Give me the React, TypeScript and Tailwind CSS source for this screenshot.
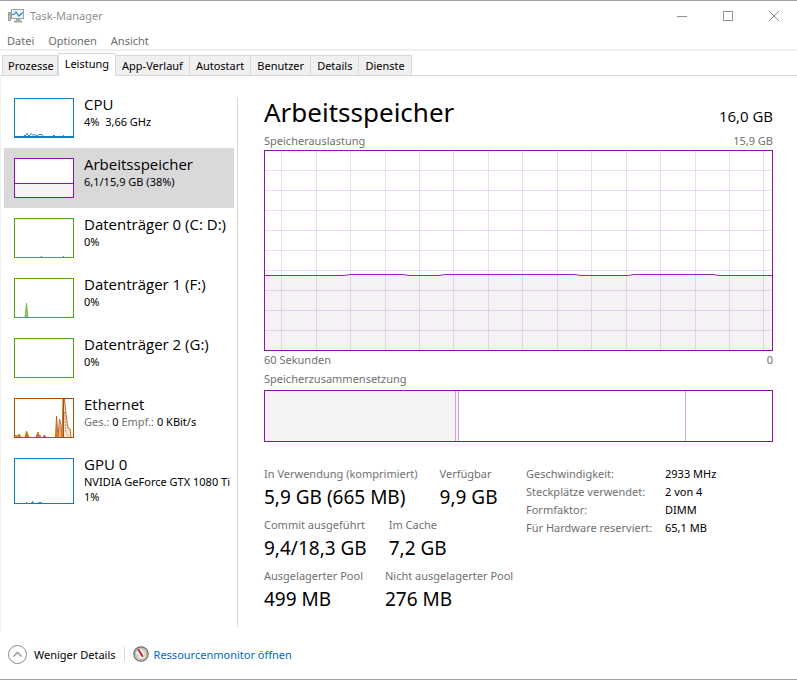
import React, { useState } from 'react';

interface Resource {
  id: string;
  title: string;
  lines: React.ReactNode[];
  chart: React.ReactNode;
}

const CpuChart = () => (
  <svg width="60" height="40" viewBox="0 0 60 40" className="shrink-0" aria-hidden="true">
    <rect x="0.5" y="0.5" width="59" height="39" fill="#fff" stroke="#117dbb" />
    <path d="M1 38.5H59" stroke="#117dbb" />
    <path
      d="M10 37.5H12L13 35.5L15 38L17.5 35.5L19 37.5L21 36.5L23 38L25 36.5H28L29 38M39 37.5H41M49 37.5H50"
      fill="none"
      stroke="#117dbb"
      strokeOpacity="0.9"
    />
  </svg>
);

const MemoryChart = () => (
  <svg width="60" height="40" viewBox="0 0 60 40" className="shrink-0" aria-hidden="true">
    <rect x="0.5" y="0.5" width="59" height="39" fill="#fff" stroke="#8b12ae" />
    <rect x="1" y="26" width="58" height="13" fill="#f4f2f4" />
    <path d="M1 25.5H59" stroke="#8b12ae" />
  </svg>
);

const DiskChart = ({ path }: { path?: string }) => (
  <svg width="60" height="40" viewBox="0 0 60 40" className="shrink-0" aria-hidden="true">
    <rect x="0.5" y="0.5" width="59" height="39" fill="#fff" stroke="#4da60c" />
    {path && <path d={path} fill="#4da60c" fillOpacity="0.6" stroke="#4da60c" strokeWidth="0.6" />}
  </svg>
);

const EthernetChart = () => (
  <svg width="60" height="40" viewBox="0 0 60 40" className="shrink-0" aria-hidden="true">
    <path
      d="M41 39L42.5 18L44 39L45.5 22L47 28L48 39L49 1H51L52 12L53 24L54 30L56 31L57 39Z"
      fill="#f8e6da"
    />
    <path
      d="M41.5 39L42.5 18L44 39L45.5 21L47 27L48 39L49 1H50.5L51.5 12L53 24L54 30L56 31L57 39"
      fill="none"
      stroke="#b45a14"
      strokeWidth="0.9"
    />
    <path
      d="M1 38L2 37L3 39L5 36L7 39ZM11 39L12.5 33L14 37L15 39ZM22 39L24 34L25 37L27 38ZM29 39L30.5 37L32 39ZM42.5 24V39M46 28V39"
      fill="#c8702c"
      stroke="#c8702c"
      strokeWidth="0.9"
    />
    <path d="M49.5 1V39" stroke="#a74f01" />
    <path d="M50.5 14L52 35L55 38" fill="none" stroke="#c8702c" strokeWidth="0.8" strokeDasharray="2 1" />
    <rect x="0.5" y="0.5" width="59" height="39" fill="none" stroke="#a74f01" />
  </svg>
);

const GpuChart = () => (
  <svg width="60" height="46" viewBox="0 0 60 46" className="shrink-0" aria-hidden="true">
    <rect x="0.5" y="0.5" width="59" height="45" fill="#fff" stroke="#117dbb" />
    <path d="M12 44.5H13M17 44.5H20M18 43.5H19M24 44.5H28" stroke="#117dbb" strokeOpacity="0.75" />
  </svg>
);

const resources: Resource[] = [
  { id: 'cpu', title: 'CPU', lines: [<>4%&nbsp; 3,66 GHz</>], chart: <CpuChart /> },
  { id: 'memory', title: 'Arbeitsspeicher', lines: ['6,1/15,9 GB (38%)'], chart: <MemoryChart /> },
  {
    id: 'disk0',
    title: 'Datenträger 0 (C: D:)',
    lines: ['0%'],
    chart: <DiskChart path="M27 39L27.5 38L28 39ZM49 39L49.5 38L50 39Z" />,
  },
  {
    id: 'disk1',
    title: 'Datenträger 1 (F:)',
    lines: ['0%'],
    chart: <DiskChart path="M11 39L12.5 25L14 39Z" />,
  },
  { id: 'disk2', title: 'Datenträger 2 (G:)', lines: ['0%'], chart: <DiskChart /> },
  {
    id: 'ethernet',
    title: 'Ethernet',
    lines: [
      <>
        <span className="text-[#707070]">Ges.:</span> 0{' '}
        <span className="text-[#707070]">Empf.:</span> 0 KBit/s
      </>,
    ],
    chart: <EthernetChart />,
  },
  {
    id: 'gpu',
    title: 'GPU 0',
    lines: ['NVIDIA GeForce GTX 1080 Ti', '1%'],
    chart: <GpuChart />,
  },
];

const tabs = ['Prozesse', 'Leistung', 'App-Verlauf', 'Autostart', 'Benutzer', 'Details', 'Dienste'];

const statRows = [
  [
    { label: 'In Verwendung (komprimiert)', value: '5,9 GB (665 MB)' },
    { label: 'Verfügbar', value: '9,9 GB' },
  ],
  [
    { label: 'Commit ausgeführt', value: '9,4/18,3 GB' },
    { label: 'Im Cache', value: '7,2 GB' },
  ],
  [
    { label: 'Ausgelagerter Pool', value: '499 MB' },
    { label: 'Nicht ausgelagerter Pool', value: '276 MB' },
  ],
];

const hardware = [
  ['Geschwindigkeit:', '2933 MHz'],
  ['Steckplätze verwendet:', '2 von 4'],
  ['Formfaktor:', 'DIMM'],
  ['Für Hardware reserviert:', '65,1 MB'],
];

const gridX = [17, 52, 86, 121, 155, 189, 224, 258, 293, 327, 362, 396, 431, 465, 499];
const gridY = [20, 40, 60, 80, 100, 120, 140, 160, 180];
const usage =
  '1,125.5 80,125.5 86,124.5 139,124.5 145,125.5 175,125.5 181,124.5 311,124.5 317,125.5 364,125.5 370,124.5 449,124.5 455,125.5 508,125.5';

const UsageChart = () => (
  <svg
    viewBox="0 0 509 201"
    preserveAspectRatio="none"
    className="block w-full h-[201px]"
    role="img"
    aria-label="Speicherauslastung"
  >
    <polygon points={`${usage} 508,200 1,200`} fill="#f4f2f4" />
    {gridX.map((x) => (
      <path key={x} d={`M${x + 0.5} 1V200`} stroke="#8b12ae" strokeOpacity="0.15" />
    ))}
    {gridY.map((y) => (
      <path key={y} d={`M1 ${y + 0.5}H507`} stroke="#8b12ae" strokeOpacity="0.15" />
    ))}
    <polyline points={usage} fill="none" stroke="#9528b4" />
    <rect x="0.5" y="0.5" width="508" height="200" fill="none" stroke="#8b12ae" />
  </svg>
);

const CompositionChart = () => (
  <svg
    viewBox="0 0 509 52"
    preserveAspectRatio="none"
    className="block w-full h-[52px]"
    role="img"
    aria-label="Speicherzusammensetzung"
  >
    <rect x="1" y="1" width="193" height="50" fill="#f4f2f4" />
    <path d="M191.5 1V51M194.5 1V51M421.5 1V51" stroke="#c9a6d6" />
    <rect x="0.5" y="0.5" width="508" height="51" fill="none" stroke="#8b12ae" />
  </svg>
);

const AppIcon = () => (
  <svg width="16" height="16" viewBox="0 0 16 16" aria-hidden="true">
    <rect x="0.5" y="4.5" width="2" height="8" fill="#c4c4c4" stroke="#a0a0a0" />
    <path d="M1 6.5H2" stroke="#5fb25f" />
    <rect x="3.5" y="1.5" width="12" height="9" fill="#e8f6fd" stroke="#a0a0a0" />
    <path d="M4 6.5H6L8 4L11 8L13 6L15 4.5" fill="none" stroke="#2a8fc8" strokeWidth="1.2" />
    <path d="M8 11H12V12.5H14V14.5H6V12.5H8Z" fill="#a8a8a8" />
  </svg>
);

const GaugeIcon = () => (
  <svg width="16" height="16" viewBox="0 0 16 16" aria-hidden="true">
    <circle cx="8" cy="8" r="7.2" fill="#d4d4d0" stroke="#6a6a6a" strokeWidth="1.2" />
    <circle cx="8" cy="8" r="5.4" fill="#f7f7f2" stroke="#9b9b96" strokeWidth="0.7" />
    <path d="M9 4.2A4.2 4.2 0 0 1 11.6 10" fill="none" stroke="#d9a878" strokeWidth="0.8" />
    <path d="M4.2 8.5A4 4 0 0 0 6 11.4" fill="none" stroke="#8aa98a" strokeWidth="0.8" />
    <path d="M4 3L6.2 3.2L10.6 10.2L9 11.2Z" fill="#d4141c" />
  </svg>
);

const App = () => {
  const [tab, setTab] = useState('Leistung');
  const [selected, setSelected] = useState('memory');

  return (
    <div className="min-h-screen flex flex-col bg-white border-y border-[#a0a0a0] text-black text-[11px] leading-[15px] font-['Noto_Sans','Open_Sans',sans-serif]">
      <header className="flex h-[29px] justify-between">
        <div className="flex items-center gap-1.5 pl-2 text-[#8f8f8f]">
          <AppIcon />
          <h1>Task-Manager</h1>
        </div>
        <div className="flex text-[#8f8f8f]">
          <button type="button" aria-label="Minimieren" className="w-[46px] flex items-center justify-center">
            <svg width="10" height="10" viewBox="0 0 10 10">
              <path d="M0 5.5H10" stroke="currentColor" />
            </svg>
          </button>
          <button type="button" aria-label="Maximieren" className="w-[46px] flex items-center justify-center">
            <svg width="10" height="10" viewBox="0 0 10 10">
              <rect x="0.5" y="0.5" width="9" height="9" fill="none" stroke="currentColor" />
            </svg>
          </button>
          <button type="button" aria-label="Schließen" className="w-[46px] flex items-center justify-center">
            <svg width="10" height="10" viewBox="0 0 10 10">
              <path d="M0 0L10 10M10 0L0 10" stroke="currentColor" />
            </svg>
          </button>
        </div>
      </header>

      <nav className="flex h-[21px] gap-3.5 px-[7px] pt-0.5 items-center border-b-2 border-[#f0f0f0] text-[#6d6d6d]">
        <button type="button">Datei</button>
        <button type="button">Optionen</button>
        <button type="button">Ansicht</button>
      </nav>

      <div role="tablist" className="flex h-[25px] items-end pl-0.5 border-b border-[#d9d9d9]">
        {tabs.map((name) => (
          <button
            key={name}
            type="button"
            role="tab"
            aria-selected={tab === name}
            onClick={() => setTab(name)}
            className={
              tab === name
                ? 'h-[23px] -mb-px px-1.5 pb-[3px] bg-white border border-b-0 border-[#d9d9d9]'
                : 'h-5 px-1.5 first:pl-[5px] first:pr-[3px] bg-[#f0f0f0] border-t border-r first:border-l border-[#d9d9d9]'
            }
          >
            {name}
          </button>
        ))}
      </div>

      <div className="flex flex-1 border-l border-[#f0f0f0]">
        <aside className="w-[233px] shrink-0 pt-3 pl-[3px]">
          {resources.map((item) => (
            <button
              key={item.id}
              type="button"
              onClick={() => setSelected(item.id)}
              className={`flex w-full h-[60px] items-start gap-2.5 pl-2.5 pt-2.5 text-left overflow-hidden ${
                selected === item.id ? 'bg-[#d9d9d9]' : ''
              }`}
            >
              {item.chart}
              <div className="-mt-1 whitespace-nowrap">
                <div className="text-[15px] leading-5 font-['Open_Sans',sans-serif]">{item.title}</div>
                {item.lines.map((line, i) => (
                  <div key={i}>{line}</div>
                ))}
              </div>
            </button>
          ))}
        </aside>
        <div className="w-px shrink-0 ml-[3px] mt-[22px] mb-1 bg-[#d9d9d9]" />

        <main className="flex-1 min-w-0 pl-[26px] pr-6 pt-4">
          <div className="flex items-end justify-between">
            <h2 className="text-[26px] leading-10">Arbeitsspeicher</h2>
            <span className="text-[15px] leading-8 font-['Open_Sans',sans-serif]">16,0 GB</span>
          </div>
          <div className="flex justify-between pt-px pb-0.5 text-[#707070]">
            <span>Speicherauslastung</span>
            <span>15,9 GB</span>
          </div>
          <UsageChart />
          <div className="flex justify-between pt-px text-[#707070]">
            <span>60 Sekunden</span>
            <span>0</span>
          </div>
          <div className="py-1 text-[#707070]">Speicherzusammensetzung</div>
          <CompositionChart />

          <div className="flex items-start gap-3 pt-6">
            <div className="w-[250px] shrink-0 whitespace-nowrap">
              {statRows.map((row) => (
                <dl key={row[0].label} className="flex gap-[22px] h-[51px]">
                  {row.map((stat) => (
                    <div key={stat.label}>
                      <dt className="leading-4 text-[#707070]">{stat.label}</dt>
                      <dd className="text-[19px] leading-[30px]">{stat.value}</dd>
                    </div>
                  ))}
                </dl>
              ))}
            </div>
            <table className="-mt-px whitespace-nowrap leading-[18px]">
              <tbody>
                {hardware.map(([label, value]) => (
                  <tr key={label}>
                    <th scope="row" className="w-[139px] p-0 text-left font-normal text-[#707070]">
                      {label}
                    </th>
                    <td className="p-0">{value}</td>
                  </tr>
                ))}
              </tbody>
            </table>
          </div>
        </main>
      </div>

      <footer className="flex h-12 items-center pl-2 pb-0.5">
        <button type="button" className="flex items-center gap-[7px]">
          <svg width="19" height="19" viewBox="0 0 19 19" aria-hidden="true">
            <circle cx="9.5" cy="9.5" r="9" fill="none" stroke="#8a8a8a" />
            <path d="M5.5 11.5L9.5 7.5L13.5 11.5" fill="none" stroke="#a0a0a0" strokeWidth="1.6" />
          </svg>
          Weniger Details
        </button>
        <div className="w-px h-3.5 mx-2 bg-[#d9d9d9]" />
        <a href="#ressourcenmonitor" className="flex items-center gap-[5px] text-[#0066cc]">
          <GaugeIcon />
          Ressourcenmonitor öffnen
        </a>
      </footer>
    </div>
  );
};

export default App;
